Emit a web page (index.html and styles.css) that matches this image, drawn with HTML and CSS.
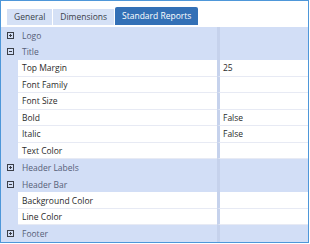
FILE: index.html
```html
<!DOCTYPE html>
<html lang="en">
<head>
  <meta charset="UTF-8" />
  <title>Report Properties</title>
  <link rel="stylesheet" href="styles.css">
</head>
<body>
  <div class="window">
    <div class="tabs">
      <span class="tab">General</span>
      <span class="tab">Dimensions</span>
      <span class="tab active">Standard Reports</span>
    </div>
    <div class="grid">
      <div class="row cat"><div class="name"><svg class="exp" viewBox="0 0 7 7"><rect x="0.5" y="0.5" width="6" height="6"/><path d="M2 3.5h3M3.5 2v3"/></svg>Logo</div><div class="value"></div></div>
      <div class="row cat"><div class="name"><svg class="exp" viewBox="0 0 7 7"><rect x="0.5" y="0.5" width="6" height="6"/><path d="M2 3.5h3"/></svg>Title</div><div class="value"></div></div>
      <div class="row prop"><div class="name">Top Margin</div><div class="value">25</div></div>
      <div class="row prop"><div class="name">Font Family</div><div class="value"></div></div>
      <div class="row prop"><div class="name">Font Size</div><div class="value"></div></div>
      <div class="row prop"><div class="name">Bold</div><div class="value">False</div></div>
      <div class="row prop"><div class="name">Italic</div><div class="value">False</div></div>
      <div class="row prop"><div class="name">Text Color</div><div class="value"></div></div>
      <div class="row cat"><div class="name"><svg class="exp" viewBox="0 0 7 7"><rect x="0.5" y="0.5" width="6" height="6"/><path d="M2 3.5h3M3.5 2v3"/></svg>Header Labels</div><div class="value"></div></div>
      <div class="row cat"><div class="name"><svg class="exp" viewBox="0 0 7 7"><rect x="0.5" y="0.5" width="6" height="6"/><path d="M2 3.5h3"/></svg>Header Bar</div><div class="value"></div></div>
      <div class="row prop"><div class="name">Background Color</div><div class="value"></div></div>
      <div class="row prop"><div class="name">Line Color</div><div class="value"></div></div>
      <div class="row cat"><div class="name"><svg class="exp" viewBox="0 0 7 7"><rect x="0.5" y="0.5" width="6" height="6"/><path d="M2 3.5h3M3.5 2v3"/></svg>Footer</div><div class="value"></div></div>
    </div>
  </div>
</body>
</html>
```

FILE: styles.css
```css
body {
  margin: 0;
  background: #ffffff;
  font-family: "Open Sans", "Noto Sans", sans-serif;
  font-size: 8.5px;
  color: #333;
}
.window {
  width: 309px;
  height: 243px;
  box-sizing: border-box;
  border: 1px solid #4e97d9;
  display: flex;
  flex-direction: column;
}
.tabs {
  height: 26px;
  box-sizing: border-box;
  display: flex;
  align-items: flex-end;
  gap: 1px;
  padding: 0 0 2px 6px;
  background: #fff;
}
.tab {
  height: 16px;
  line-height: 16px;
  padding: 0 7px;
  background: #d5e1f6;
  color: #3a3f4a;
}
.tab.active {
  height: 18px;
  line-height: 18px;
  background: #3370b6;
  color: #fff;
  border-radius: 2px 2px 0 0;
}
.grid {
  flex: 1;
  display: flex;
  flex-direction: column;
  background: #d2def6;
}
.row {
  flex: 1;
  display: flex;
}
.name {
  width: 216px;
  display: flex;
  align-items: center;
  box-sizing: border-box;
}
.value {
  flex: 1;
  display: flex;
  align-items: center;
  padding-left: 3px;
  border-left: 3px solid #c6d2ec;
}
.cat .name {
  padding-left: 6px;
  color: #566078;
}
.exp {
  width: 7px;
  height: 7px;
  margin-right: 8px;
  fill: none;
  stroke: #3b3f48;
  stroke-width: 1;
}
.prop .name,
.prop .value {
  background: #fff;
  border-bottom: 1px solid #e7eaf4;
}
.prop .name {
  margin-left: 17px;
  width: 199px;
  padding-left: 4px;
  color: #2b2b2b;
}
.prop .value {
  color: #2b2b2b;
}
```
